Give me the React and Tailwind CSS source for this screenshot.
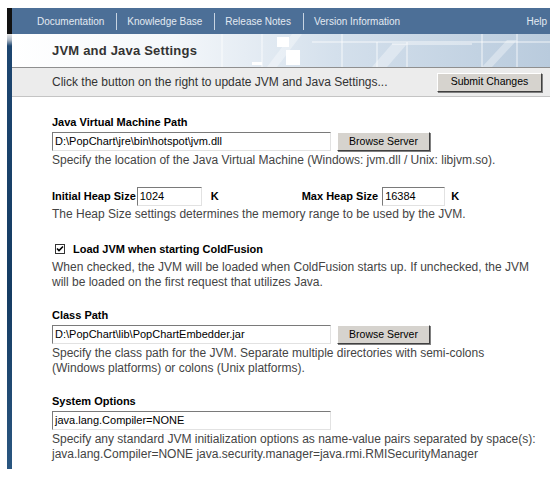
import React from "react";

const font = { fontFamily: '"Liberation Sans", Arial, sans-serif' };

function Input({ value, w }) {
  return (
    <div
      className={`h-[19px] ${w} bg-white border border-t-[#7a7a7a] border-l-[#7a7a7a] border-r-[#e2e2e2] border-b-[#e2e2e2] text-[11px] font-normal text-black leading-[17px] pl-[2px] whitespace-nowrap overflow-hidden`}
    >
      {value}
    </div>
  );
}

function Btn({ children, w }) {
  return (
    <div
      className={`h-[19px] ${w} bg-[#d6d3ce] border border-t-white border-l-white border-r-[#404040] border-b-[#404040] shadow-[1px_1px_0_#808080] text-[10.5px] font-normal text-black flex items-center justify-center`}
    >
      {children}
    </div>
  );
}

function Sep() {
  return <span className="ml-[12px] mr-[10px] w-px h-[17px] bg-[#c8d4e2]" />;
}

export default function App() {
  return (
    <div className="w-[558px] h-[477px] bg-white overflow-hidden pt-[8px] pl-[7px]" style={font}>
      <div className="w-[543px]">
        {/* nav */}
        <div className="h-[26px] flex bg-[#4c6f97]">
          <div className="w-[5px] bg-[#111]" />
          <div className="flex-1 flex items-center text-[10px] text-[#e3eaf2] whitespace-nowrap">
            <span className="ml-[25px]">Documentation</span>
            <Sep />
            <span>Knowledge Base</span>
            <Sep />
            <span>Release Notes</span>
            <Sep />
            <span>Version Information</span>
            <span className="ml-auto mr-[3px]">Help</span>
          </div>
        </div>
        <div className="flex">
          <div className="w-[5px] h-[435px] bg-[linear-gradient(to_bottom,#e8e8e8_0px,#aab6c4_6px,#1d4670_12px,#153c63_60%,#2a5680_100%)]" />
          <div className="flex-1">
            {/* header */}
            <div className="relative h-[33px] bg-[linear-gradient(to_right,#ffffff_0%,#f4f7fa_30%,#d4e0ec_60%,#b9cbdd_100%)] flex items-center overflow-hidden">
              <svg className="absolute inset-0" width="538" height="33" viewBox="0 0 538 33">
                <g stroke="#ffffff" strokeOpacity="0.8" strokeWidth="1" fill="none">
                  <line x1="210" y1="0" x2="210" y2="33" />
                  <line x1="250" y1="0" x2="250" y2="33" />
                  <line x1="330" y1="0" x2="330" y2="33" />
                  <line x1="365" y1="8" x2="365" y2="33" />
                  <line x1="395" y1="8" x2="395" y2="33" />
                  <line x1="470" y1="0" x2="470" y2="33" />
                  <line x1="505" y1="0" x2="505" y2="33" />
                  <line x1="300" y1="8" x2="538" y2="8" />
                  <line x1="380" y1="10" x2="460" y2="10" />
                </g>
                <g fill="#ffffff" fillOpacity="0.35">
                  <polygon points="360,33 380,10 395,10 375,33" />
                  <polygon points="470,33 495,6 505,6 480,33" />
                  <polygon points="255,33 280,0 290,0 265,33" />
                </g>
                <rect x="265" y="3" width="12" height="10" fill="#ffffff" />
                <rect x="274" y="16" width="14" height="15" fill="#ffffff" />
                <rect x="240" y="28" width="10" height="3" fill="#ffffff" />
              </svg>
              <span className="relative ml-[40px] text-[13px] font-bold text-[#333] tracking-[0.2px]">
                JVM and Java Settings
              </span>
            </div>
            {/* subbar */}
            <div className="h-[30px] bg-[#ececec] border-t border-t-[#8f8f8f] border-b border-b-[#c4c4c4] flex items-center">
              <span className="ml-[40px] text-[12px] text-[#333]">
                Click the button on the right to update JVM and Java Settings...
              </span>
              <div className="ml-auto mr-[8px]">
                <Btn w="w-[105px]">Submit Changes</Btn>
              </div>
            </div>
            {/* form */}
            <div className="pl-[40px] text-[12px] text-[#444] whitespace-nowrap">
              <div className="mt-[18px] text-[11px] font-bold text-black leading-[14px]">
                Java Virtual Machine Path
              </div>
              <div className="mt-[3px] flex items-center gap-[6px]">
                <Input value="D:\PopChart\jre\bin\hotspot\jvm.dll" w="w-[279px]" />
                <Btn w="w-[93px]">Browse Server</Btn>
              </div>
              <div className="mt-[2px] leading-[15px]">
                Specify the location of the Java Virtual Machine (Windows: jvm.dll / Unix: libjvm.so).
              </div>
              <div className="mt-[19px] flex items-center text-[11px] font-bold text-black">
                <span>Initial Heap Size</span>
                <div className="ml-[1px]"><Input value="1024" w="w-[65px]" /></div>
                <span className="ml-[9px]">K</span>
                <span className="ml-[83px]">Max Heap Size</span>
                <div className="ml-[4px]"><Input value="16384" w="w-[63px]" /></div>
                <span className="ml-[6px]">K</span>
              </div>
              <div className="mt-[1px] leading-[15px]">
                The Heap Size settings determines the memory range to be used by the JVM.
              </div>
              <div className="mt-[20px] h-[14px] flex items-center text-[11px] font-bold text-black">
                <div className="ml-[3px] w-[10px] h-[10px] border border-[#333] bg-white flex items-center justify-center">
                  <svg width="8" height="8" viewBox="0 0 8 8">
                    <path d="M1 3.5 L3 5.5 L7 1.5" stroke="#000" strokeWidth="1.6" fill="none" />
                  </svg>
                </div>
                <span className="ml-[8px]">Load JVM when starting ColdFusion</span>
              </div>
              <div className="mt-[4px] leading-[15px]">
                When checked, the JVM will be loaded when ColdFusion starts up. If unchecked, the JVM
                <br />
                will be loaded on the first request that utilizes Java.
              </div>
              <div className="mt-[18px] text-[11px] font-bold text-black leading-[14px]">
                Class Path
              </div>
              <div className="mt-[3px] flex items-center gap-[6px]">
                <Input value="D:\PopChart\lib\PopChartEmbedder.jar" w="w-[279px]" />
                <Btn w="w-[93px]">Browse Server</Btn>
              </div>
              <div className="mt-[2px] leading-[15px]">
                Specify the class path for the JVM. Separate multiple directories with semi-colons
                <br />
                (Windows platforms) or colons (Unix platforms).
              </div>
              <div className="mt-[18px] text-[11px] font-bold text-black leading-[14px]">
                System Options
              </div>
              <div className="mt-[3px]">
                <Input value="java.lang.Compiler=NONE" w="w-[279px]" />
              </div>
              <div className="mt-[2px] leading-[15px]">
                Specify any standard JVM initialization options as name-value pairs separated by space(s):
                <br />
                java.lang.Compiler=NONE java.security.manager=java.rmi.RMISecurityManager
              </div>
            </div>
          </div>
        </div>
      </div>
    </div>
  );
}
